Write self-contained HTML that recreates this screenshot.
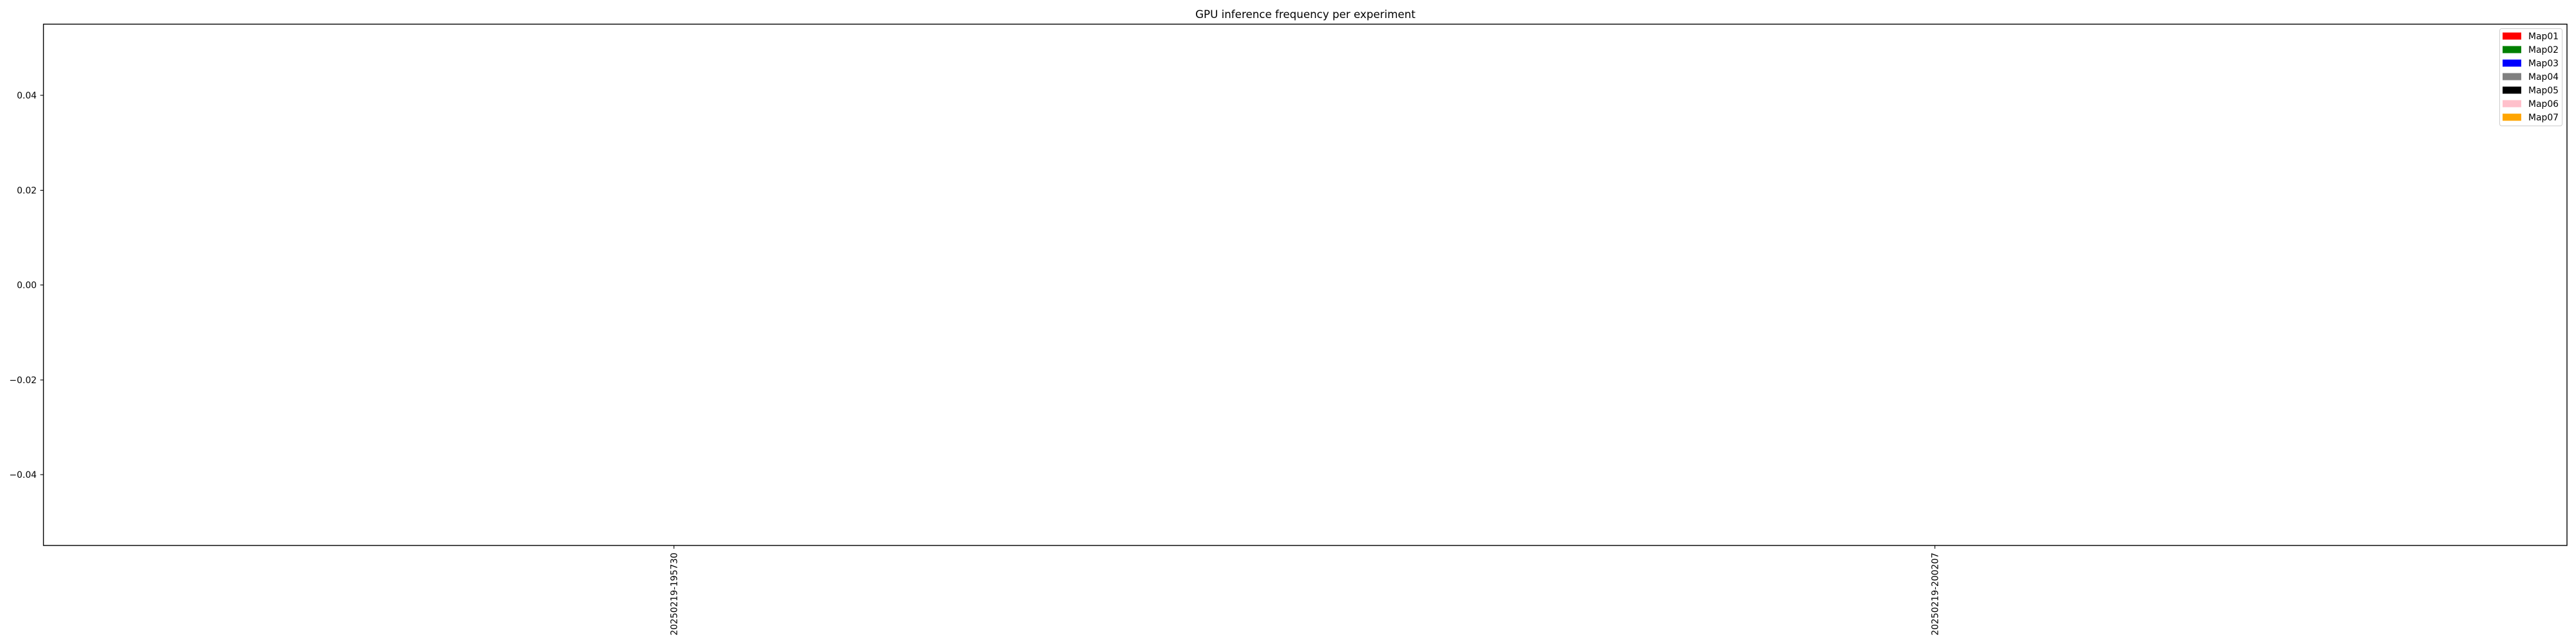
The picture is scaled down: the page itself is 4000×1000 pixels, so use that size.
<!DOCTYPE html>
<html><head><meta charset="utf-8"><style>
html,body{margin:0;padding:0;background:#fff;}
svg{display:block;}
text{font-family:"DejaVu Sans","Liberation Sans",sans-serif;fill:#000;}
</style></head><body>
<svg width="4000" height="1000" viewBox="0 0 4000 1000" xmlns="http://www.w3.org/2000/svg">
<rect width="4000" height="1000" fill="#fff"/>
<text x="2027" y="28" font-size="16.7" text-anchor="middle">GPU inference frequency per experiment</text>
<rect x="67.5" y="37.5" width="3918.5" height="809.5" fill="none" stroke="#000" stroke-width="1.4"/>
<g stroke="#000" stroke-width="1.1">
<line x1="62.5" y1="148" x2="67.5" y2="148"/>
<line x1="62.5" y1="295.5" x2="67.5" y2="295.5"/>
<line x1="62.5" y1="442.5" x2="67.5" y2="442.5"/>
<line x1="62.5" y1="590" x2="67.5" y2="590"/>
<line x1="62.5" y1="737" x2="67.5" y2="737"/>
<line x1="1046.5" y1="847" x2="1046.5" y2="852"/>
<line x1="3004.5" y1="847" x2="3004.5" y2="852"/>
</g>
<g font-size="13.9" text-anchor="end">
<text x="57" y="153">0.04</text>
<text x="57" y="300.5">0.02</text>
<text x="57" y="447.5">0.00</text>
<text x="57" y="595">−0.02</text>
<text x="57" y="742">−0.04</text>
</g>
<g font-size="13.9" text-anchor="end">
<text transform="translate(1051.5,858) rotate(-90)">20250219-195730</text>
<text transform="translate(3009.5,858) rotate(-90)">20250219-200207</text>
</g>
<rect x="3881.5" y="44.5" width="97" height="151" rx="3" fill="#fff" fill-opacity="0.8" stroke="#ccc" stroke-width="1"/>
<g>
<rect x="3886" y="50.5" width="29" height="11" fill="#ff0000"/>
<rect x="3886" y="71.5" width="29" height="11" fill="#008000"/>
<rect x="3886" y="92.5" width="29" height="11" fill="#0000ff"/>
<rect x="3886" y="113.5" width="29" height="11" fill="#808080"/>
<rect x="3886" y="134.5" width="29" height="11" fill="#000000"/>
<rect x="3886" y="155.5" width="29" height="11" fill="#ffc0cb"/>
<rect x="3886" y="176.5" width="29" height="11" fill="#ffa500"/>
</g>
<g font-size="13.9">
<text x="3926" y="61">Map01</text>
<text x="3926" y="82">Map02</text>
<text x="3926" y="103">Map03</text>
<text x="3926" y="124">Map04</text>
<text x="3926" y="145">Map05</text>
<text x="3926" y="166">Map06</text>
<text x="3926" y="187">Map07</text>
</g>
</svg>
</body></html>
